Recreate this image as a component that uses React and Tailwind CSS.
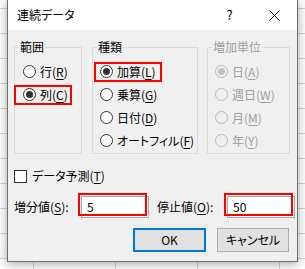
import React from "react";

function Radio({ text, k, checked, disabled, red, redClass }) {
  const circle = (
    <span
      className={`flex shrink-0 items-center justify-center w-[13px] h-[13px] rounded-full border ${
        disabled ? "border-[#bcbcbc] bg-[#f0f0f0]" : "border-[#333] bg-white"
      }`}
    >
      {checked && (
        <span className={`w-[7px] h-[7px] rounded-full ${disabled ? "bg-[#c4c4c4]" : "bg-[#333]"}`} />
      )}
    </span>
  );
  const label = (
    <span className={`ml-[4px] whitespace-nowrap ${disabled ? "text-[#a0a0a0]" : "text-black"}`}>
      {text}(<span className="underline underline-offset-2">{k}</span>)
    </span>
  );
  return (
    <div className="flex items-center h-[23px]">
      {red ? (
        <span className={`flex items-center h-[20px] border-2 border-[#f00] ${redClass}`}>
          {circle}
          {label}
        </span>
      ) : (
        <>
          {circle}
          {label}
        </>
      )}
    </div>
  );
}

function Group({ title, width, disabled, pad, className, children }) {
  return (
    <fieldset className={`border border-[#dcdcdc] ${width} ${className}`}>
      <legend className={`ml-[4px] px-[1px] h-[16px] leading-[16px] ${disabled ? "text-[#a0a0a0]" : "text-black"}`}>
        {title}
      </legend>
      <div className={`pt-[5px] pb-[1px] ${pad}`}>{children}</div>
    </fieldset>
  );
}

function Field({ label, k, value, labelW, className }) {
  return (
    <div className={`flex items-center ${className}`}>
      <span className={`whitespace-nowrap ${labelW}`}>
        {label}(<span className="underline underline-offset-2">{k}</span>):
      </span>
      <div className="relative w-[68px] h-[22px] border border-[#a9a9a9] bg-white flex items-center pl-[5px]">
        {value}
        <div className="absolute -left-[4px] -top-[4px] right-[1px] bottom-[1px] border-2 border-[#f00]" />
      </div>
    </div>
  );
}

export default function App() {
  return (
    <div className="relative w-[305px] h-[269px] overflow-hidden bg-white bg-[repeating-linear-gradient(to_bottom,transparent_0px,transparent_8px,#d6d6d6_8px,#d6d6d6_9px,transparent_9px,transparent_25px),repeating-linear-gradient(to_right,transparent_0px,transparent_33px,#d6d6d6_33px,#d6d6d6_34px,transparent_34px,transparent_82px)] font-['Yu_Gothic_UI','Noto_Sans_CJK_JP',sans-serif] [font-feature-settings:'palt'] text-[12px] text-black">
      <div className="absolute left-[7px] top-[-1px] w-[291px] h-[263px] border border-[#6e6e6e] bg-[#f0f0f0] shadow-[0_2px_10px_rgba(0,0,0,0.35)]">
        <div className="flex items-center h-[30px] bg-white">
          <span className="pl-[9px] flex-1">連続データ</span>
          <span className="w-[45px] h-[30px] flex items-center justify-center text-[13px]">?</span>
          <span className="w-[45px] h-[30px] flex items-center justify-center">
            <svg width="11" height="11" viewBox="0 0 11 11">
              <path d="M0.5 0.5 L10.5 10.5 M10.5 0.5 L0.5 10.5" stroke="#000" strokeWidth="1" fill="none" />
            </svg>
          </span>
        </div>

        <div className="pl-[6px] pr-[7px] pt-[9px]">
          <div className="flex">
            <Group title="範囲" width="w-[68px]" pad="pl-[8px]">
              <Radio text="行" k="R" />
              <Radio text="列" k="C" checked red redClass="-ml-[9px] pl-[7px] pr-[2px]" />
            </Group>
            <Group title="種類" width="w-[106px]" pad="pl-[7px]" className="ml-[10px]">
              <Radio text="加算" k="L" checked red redClass="-ml-[6px] pl-[4px] pr-[4px]" />
              <Radio text="乗算" k="G" />
              <Radio text="日付" k="D" />
              <Radio text="オートフィル" k="F" />
            </Group>
            <Group title="増加単位" width="w-[83px]" pad="pl-[7px]" className="ml-[9px]" disabled>
              <Radio text="日" k="A" checked disabled />
              <Radio text="週日" k="W" disabled />
              <Radio text="月" k="M" disabled />
              <Radio text="年" k="Y" disabled />
            </Group>
          </div>

          <div className="flex items-center h-[20px] mt-[12px]">
            <span className="w-[13px] h-[13px] border border-[#333] bg-white" />
            <span className="ml-[5px]">
              データ予測(<span className="underline underline-offset-2">T</span>)
            </span>
          </div>

          <div className="flex items-center mt-[10px]">
            <Field label="増分値" k="S" value="5" labelW="w-[67px]" />
            <Field label="停止値" k="O" value="50" labelW="w-[70px]" className="ml-[8px]" />
          </div>

          <div className="flex justify-end pr-[1px] mt-[10px]">
            <button className="w-[73px] h-[24px] border-2 border-[#0078d7] bg-[#e1e1e1]">OK</button>
            <button className="ml-[11px] w-[72px] h-[24px] border border-[#adadad] bg-[#e1e1e1]">キャンセル</button>
          </div>
        </div>
      </div>
    </div>
  );
}
